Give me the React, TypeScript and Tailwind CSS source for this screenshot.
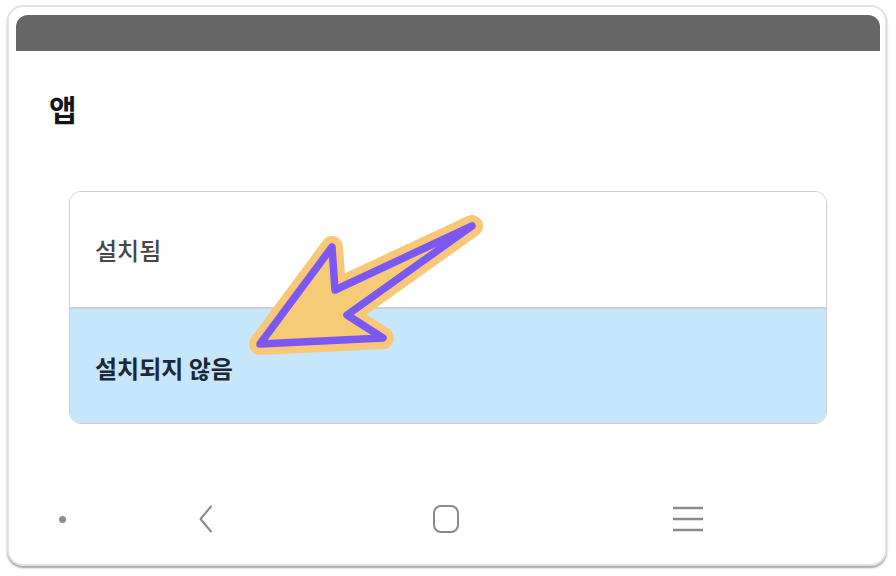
import React from "react";

const KR = { fontFamily: '"Noto Sans CJK KR", "Noto Sans", sans-serif' };

export default function App() {
  return (
    <div className="relative w-[896px] h-[576px] bg-white overflow-hidden" style={KR}>
      <div className="pt-[5px] pl-[7px] pr-[9px]">
        <div className="h-[561px] rounded-[16px] border-2 border-[#e2e2e2] bg-white shadow-[0_2px_2px_rgba(0,0,0,0.35)] pt-[8px] pl-[7px] pr-[5px] flex flex-col">
          <div className="h-[36px] rounded-t-[12px] bg-[#666666]" />
          <div className="mt-[37px] pl-[33px] h-[40px] leading-[40px] text-[30px] font-bold text-[#151515]">앱</div>
          <div className="mt-[63px] mx-[53px] h-[233px] rounded-[12px] border-[1.5px] border-[#cfcfcf] overflow-hidden flex flex-col">
            <div className="h-[115px] flex items-center pl-[25px] bg-white text-[24px] font-medium text-[#474747]">설치됨</div>
            <div className="h-[1.5px] bg-[#cfcfcf]" />
            <div className="flex-1 flex items-center pl-[25px] pt-[4px] bg-[#c6e6fb] text-[24px] font-semibold text-[#1c2836]">설치되지 않음</div>
          </div>
          <div className="mt-[75px] h-[40px] flex items-center pl-[26px]">
            <div className="w-[40px] h-[40px] flex items-center justify-center">
              <div className="w-[7px] h-[7px] rounded-full bg-[#8c8c8c]" />
            </div>
            <div className="ml-[104px] w-[40px] h-[40px] flex items-center justify-center">
              <svg width="16" height="28" viewBox="0 0 16 28" fill="none">
                <path d="M13 1.5 L2.5 14 L13 26.5" stroke="#8a8a8a" strokeWidth="2" strokeLinecap="round" strokeLinejoin="round" />
              </svg>
            </div>
            <div className="ml-[200px] w-[40px] h-[40px] flex items-center justify-center">
              <svg width="28" height="30" viewBox="0 0 28 30" fill="none">
                <rect x="2" y="2" width="24" height="26" rx="7" stroke="#8a8a8a" strokeWidth="2" />
              </svg>
            </div>
            <div className="ml-[202px] w-[40px] h-[40px] flex items-center justify-center">
              <svg width="32" height="28" viewBox="0 0 32 28" fill="none">
                <path d="M1 3 H31 M1 14 H31 M1 25 H31" stroke="#8a8a8a" strokeWidth="2.5" />
              </svg>
            </div>
          </div>
        </div>
      </div>
      <svg className="absolute left-0 top-0 pointer-events-none" width="896" height="576" viewBox="0 0 896 576">
        <path
          d="M260 344 L332 247 L335 290 L472 226 L347 315 L383 338 Z"
          fill="#f7cb76"
          stroke="#f8c878"
          strokeWidth="22"
          strokeLinejoin="round"
        />
        <path
          d="M260 344 L332 247 L335 290 L472 226 L347 315 L383 338 Z"
          fill="#f6cb76"
          stroke="#7b58f2"
          strokeWidth="7.5"
          strokeLinejoin="round"
        />
      </svg>
    </div>
  );
}
